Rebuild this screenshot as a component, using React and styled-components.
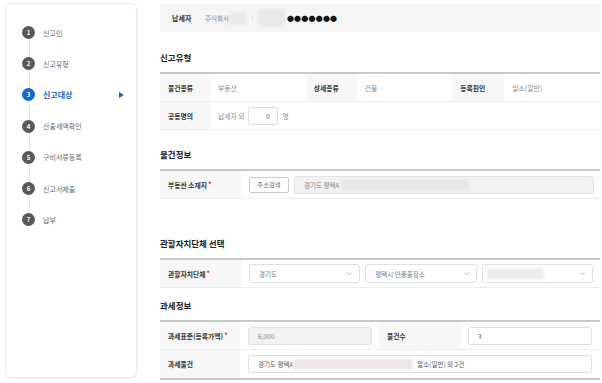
import React from "react";
import styled, { createGlobalStyle } from "styled-components";

const Global = createGlobalStyle`
  html, body { margin: 0; padding: 0; background: #fff; }
  body { font-family: "Noto Sans CJK KR", "Noto Sans", sans-serif; color: #333; }
  * { box-sizing: border-box; }
`;

const Page = styled.div`
  display: flex;
  width: 602px;
  height: 383px;
  padding: 3px 2px 0 5px;
  overflow: hidden;
`;

const Sidebar = styled.aside`
  width: 132px;
  height: 375px;
  flex: none;
  border: 1px solid #ececec;
  border-radius: 6px;
  box-shadow: 0 1px 2px rgba(0,0,0,0.06);
  padding: 13px 0 0 16px;
`;

const StepList = styled.ol`
  list-style: none;
  margin: 0;
  padding: 0;
`;

const Step = styled.li`
  position: relative;
  display: flex;
  align-items: center;
  height: 31.2px;
  &:not(:last-child)::after {
    content: "";
    position: absolute;
    left: 6.5px;
    top: 22px;
    height: 19px;
    width: 1px;
    background: #e2e2e2;
  }
`;

const Circle = styled.span`
  width: 13px;
  height: 13px;
  border-radius: 50%;
  background: ${(p) => (p.$active ? "#1366d6" : "#595959")};
  color: #fff;
  font-size: 6px;
  font-weight: 700;
  display: flex;
  align-items: center;
  justify-content: center;
  flex: none;
`;

const StepName = styled.span`
  margin-left: 8px;
  font-size: ${(p) => (p.$active ? "8px" : "7px")};
  font-weight: ${(p) => (p.$active ? 700 : 400)};
  color: ${(p) => (p.$active ? "#1a62cc" : "#6a6a6a")};
  flex: 1;
`;

const Arrow = styled.span`
  width: 0;
  height: 0;
  border-left: 5px solid #1a62cc;
  border-top: 3.5px solid transparent;
  border-bottom: 3.5px solid transparent;
  margin-right: 12px;
`;

const Main = styled.main`
  margin-left: 23px;
  width: 440px;
  display: flex;
  flex-direction: column;
  padding-top: 1px;
`;

const TopBar = styled.div`
  height: 28px;
  background: #f5f5f5;
  border-radius: 4px;
  display: flex;
  align-items: center;
  padding-left: 12px;
`;

const TopLabel = styled.span`
  font-size: 7px;
  font-weight: 700;
  color: #333;
  width: 33px;
`;

const TopValue = styled.span`
  font-size: 6.5px;
  color: #888;
`;

const Blur = styled.span`
  display: inline-block;
  width: ${(p) => p.$w}px;
  height: ${(p) => p.$h}px;
  margin-left: ${(p) => p.$ml || 0}px;
  background: ${(p) => p.$c || "#e9e9e9"};
  filter: blur(1.5px);
  border-radius: 2px;
  flex: none;
`;

const Sep = styled.span`
  width: 1px;
  height: 6px;
  background: #e0e0e0;
  margin-left: 6px;
`;

const Dots = styled.span`
  font-size: 7px;
  letter-spacing: 0.2px;
  color: #111;
  margin-left: 2px;
`;

const Section = styled.section`
  margin-top: ${(p) => p.$mt}px;
`;

const Title = styled.h2`
  margin: 0 0 7px;
  height: 16px;
  line-height: 16px;
  font-size: 8.5px;
  font-weight: 700;
  color: #222;
`;

const Table = styled.div`
  border-top: 2px solid #c8c8c8;
  border-bottom: ${(p) => (p.$closed ? "2px solid #c8c8c8" : "none")};
`;

const Row = styled.div`
  display: grid;
  grid-template-columns: ${(p) => p.$cols};
  min-height: 28px;
  border-bottom: 1px solid #eeeeee;
  &:last-child { border-bottom: ${(p) => (p.$lastLine ? "1px solid #eeeeee" : "none")}; }
`;

const Label = styled.div`
  background: #f7f7f7;
  display: flex;
  align-items: center;
  padding-left: 8px;
  font-size: 6.8px;
  font-weight: 700;
  color: #333;
  white-space: nowrap;
`;

const Req = styled.span`
  color: #e0322a;
  margin-left: 1px;
  position: relative;
  top: -1px;
`;

const Cell = styled.div`
  display: flex;
  align-items: center;
  gap: ${(p) => p.$gap || 0}px;
  padding: 0 ${(p) => p.$pr ?? 7}px 0 ${(p) => p.$pl ?? 8}px;
  font-size: 6.8px;
  color: #8a8a8a;
  grid-column: ${(p) => p.$span || "auto"};
  white-space: nowrap;
`;

const Box = styled.div`
  height: ${(p) => p.$h || 18}px;
  width: ${(p) => (p.$w ? `${p.$w}px` : "auto")};
  flex: ${(p) => (p.$w ? "none" : "1")};
  border: 1px solid ${(p) => (p.$gray ? "#e2e2e2" : "#dedede")};
  background: ${(p) => (p.$gray ? "#f2f2f2" : "#fff")};
  border-radius: 3px;
  display: flex;
  align-items: center;
  justify-content: ${(p) => (p.$right ? "flex-end" : "flex-start")};
  padding: 0 ${(p) => (p.$right ? 7 : 6)}px 0 ${(p) => (p.$right ? 0 : 9)}px;
  font-size: 6.5px;
  color: ${(p) => (p.$dark ? "#555" : "#8a8a8a")};
  margin: ${(p) => p.$m || 0};
`;

const Button = styled.button`
  height: 16px;
  width: 40px;
  flex: none;
  border: 1px solid #c9c9c9;
  background: #fff;
  border-radius: 2px;
  font-family: inherit;
  font-size: 6.2px;
  color: #666;
  padding: 0;
  margin-right: 5px;
`;

const Select = styled.div`
  flex: 1;
  height: 19px;
  border: 1px solid #e0e0e0;
  border-radius: 3px;
  background: #fff;
  display: flex;
  align-items: center;
  padding: 0 7px 0 9px;
  font-size: 6.5px;
  color: #777;
`;

const SelText = styled.span`
  flex: 1;
  display: flex;
  align-items: center;
`;

const Chevron = () => (
  <svg width="5" height="3" viewBox="0 0 5 3">
    <polyline points="0.5,0.5 2.5,2.5 4.5,0.5" fill="none" stroke="#aaa" strokeWidth="0.8" />
  </svg>
);

const steps = ["신고인", "신고유형", "신고대상", "산출세액확인", "구비서류등록", "신고서제출", "납부"];

export default function App() {
  return (
    <>
      <Global />
      <Page>
        <Sidebar>
          <StepList>
            {steps.map((s, i) => {
              const active = i === 2;
              return (
                <Step key={s}>
                  <Circle $active={active}>{i + 1}</Circle>
                  <StepName $active={active}>{s}</StepName>
                  {active && <Arrow />}
                </Step>
              );
            })}
          </StepList>
        </Sidebar>
        <Main>
          <TopBar>
            <TopLabel>납세자</TopLabel>
            <TopValue>주식회사</TopValue>
            <Blur $w={17} $h={13} />
            <Sep />
            <Blur $w={27} $h={18} $ml={5} />
            <Dots>●●●●●●●</Dots>
          </TopBar>

          <Section $mt={17}>
            <Title>신고유형</Title>
            <Table>
              <Row $cols="50px 1fr 51px 1fr 52px 1fr">
                <Label>물건종류</Label>
                <Cell>부동산</Cell>
                <Label>상세종류</Label>
                <Cell>건물</Cell>
                <Label>등록원인</Label>
                <Cell>말소(일반)</Cell>
              </Row>
              <Row $cols="50px 1fr" $lastLine>
                <Label>공동명의</Label>
                <Cell>
                  납세자 외
                  <Box $w={30} $right $dark $m="0 5px 0 3px">0</Box>
                  명
                </Cell>
              </Row>
            </Table>
          </Section>

          <Section $mt={16}>
            <Title>물건정보</Title>
            <Table>
              <Row $cols="81px 1fr" $lastLine>
                <Label>부동산 소재지<Req>*</Req></Label>
                <Cell $pr={6}>
                  <Button>주소검색</Button>
                  <Box $gray>
                    경기도 평택A
                    <Blur $w={128} $h={10} $ml={2} $c="#e6e6e6" />
                  </Box>
                </Cell>
              </Row>
            </Table>
          </Section>

          <Section $mt={36}>
            <Title>관할자치단체 선택</Title>
            <Table>
              <Row $cols="81px 1fr" $lastLine>
                <Label>관할자치단체<Req>*</Req></Label>
                <Cell $gap={5} $pr={7}>
                  <Select><SelText>경기도</SelText><Chevron /></Select>
                  <Select><SelText>평택시 안중출장소</SelText><Chevron /></Select>
                  <Select>
                    <SelText><Blur $w={57} $h={11} $ml={-5} $c="#ebebeb" /></SelText>
                    <Chevron />
                  </Select>
                </Cell>
              </Row>
            </Table>
          </Section>

          <Section $mt={9}>
            <Title>과세정보</Title>
            <Table $closed>
              <Row $cols="80px 1fr 82px 1fr">
                <Label>과세표준(등록가액)<Req>*</Req></Label>
                <Cell $pr={7}><Box $gray>6,000</Box></Cell>
                <Label>물건수</Label>
                <Cell $pl={7} $pr={8}><Box $dark>3</Box></Cell>
              </Row>
              <Row $cols="80px 1fr">
                <Label>과세물건</Label>
                <Cell $pr={8}>
                  <Box $dark>
                    경기도 평택A
                    <Blur $w={120} $h={11} $ml={0} $c="#ede7eb" />
                    <span style={{ marginLeft: 4 }}>말소(일반) 외 2건</span>
                  </Box>
                </Cell>
              </Row>
            </Table>
          </Section>
        </Main>
      </Page>
    </>
  );
}
